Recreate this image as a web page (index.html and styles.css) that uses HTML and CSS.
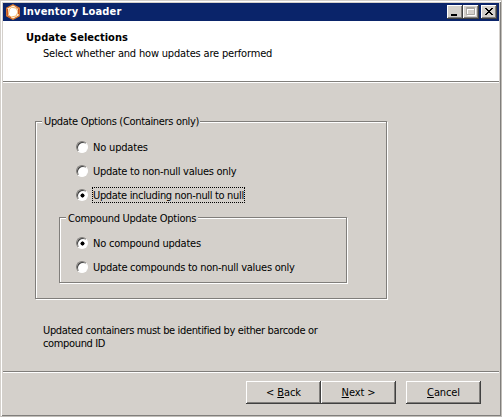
FILE: index.html
```html
<!DOCTYPE html>
<html lang="en">
<head>
<meta charset="utf-8">
<title>Inventory Loader</title>
<link rel="stylesheet" href="styles.css">
</head>
<body>
<main class="window">
  <header class="titlebar">
    <svg class="logo" width="16" height="16" viewBox="0 0 16 16"><path d="M8 .7 14.3 4.2V11.8L8 15.3 1.7 11.8V4.2Z" fill="#fff3df" stroke="#dc782b" stroke-width="1.3"/><path d="M6.5 3.2 11.3 4.2 13 8 11 12 6.2 13 3.3 10.8 4.3 5.5Z" fill="#fff" stroke="#efb36b"/><path d="M2.5 5V11.5L6 14M11.5 3 13.5 5V10" fill="none" stroke="#c85221"/></svg>
    <h1 class="title">Inventory Loader</h1>
    <div class="controls">
      <button class="control" aria-label="Minimize"><svg width="16" height="14"><path d="M4 9h6v2H4z"/></svg></button>
      <button class="control" aria-label="Maximize"><svg width="16" height="14"><path d="M4.5 3.5h8v7h-8zM4 4.5h9" fill="none" stroke="#fff"/><path d="M3.5 2.5h8v7h-8zM3 3.5h9" fill="none" stroke="#aaa7a2"/></svg></button>
      <button class="control close" aria-label="Close"><svg width="16" height="14"><path d="M4 3h2v1h1v1h2V4h1V3h2v1h-1v1h-1v1H9v1h1v1h1v1h1v1h-2V9H9V8H7v1H6v1H4V9h1V8h1V7h1V6H6V5H5V4H4z"/></svg></button>
    </div>
  </header>
  <section class="heading">
    <h2 class="step">Update Selections</h2>
    <p class="hint">Select whether and how updates are performed</p>
  </section>
  <section class="content">
    <div class="group outer">
      <span class="legend t-outer">Update Options (Containers only)</span>
      <label class="option"><i class="radio"></i><span class="label t-no">No updates</span></label>
      <label class="option"><i class="radio"></i><span class="label t-nonnull">Update to non-null values only</span></label>
      <label class="option"><i class="radio on"></i><span class="label focus t-null">Update including non-null to null</span></label>
      <div class="group inner">
        <span class="legend t-inner">Compound Update Options</span>
        <label class="option"><i class="radio on"></i><span class="label t-nocomp">No compound updates</span></label>
        <label class="option"><i class="radio"></i><span class="label t-comp">Update compounds to non-null values only</span></label>
      </div>
    </div>
    <p class="note">Updated containers must be identified by either barcode or<br>compound ID</p>
  </section>
  <footer class="actions">
    <button class="button">&lt; <u>B</u>ack</button>
    <button class="button"><u>N</u>ext &gt;</button>
    <button class="button cancel"><u>C</u>ancel</button>
  </footer>
</main>
</body>
</html>
```
FILE: styles.css
```css
* { box-sizing: border-box; }
body {
  margin: 0;
  overflow: hidden;
  background: #d4d0c8;
  color: #000;
  font: 11px/13px "DejaVu Sans Condensed", "DejaVu Sans", sans-serif;
  font-stretch: condensed;
}
h1, h2, p { margin: 0; }
button { font: inherit; color: inherit; padding: 0; }
.window {
  width: 502px;
  height: 417px;
  display: flex;
  flex-direction: column;
  background: #d4d0cb;
  padding: 2px 1px 1px 2px;
  border-left: 1px solid #d4d0cb;
  border-top: 1px solid #d4d0cb;
  border-right: 1px solid #c0bdb8;
  border-bottom: 1px solid #c0bdb8;
  box-shadow: inset 1px 1px #fff, inset -1px -1px #807e7b;
}
.titlebar {
  flex: none;
  height: 18px;
  display: flex;
  align-items: center;
  background: #0a246a;
  color: #fff;
  padding: 0 2px 0 2px;
  margin-right: 1px;
}
.logo { flex: none; }
.title {
  flex: 1;
  margin-left: 2px;
  font-size: 11px;
  line-height: 18px;
  letter-spacing: .17px;
  white-space: nowrap;
}
.controls { display: flex; }
.control {
  width: 16px;
  height: 14px;
  border: 0;
  background: #d4d0cb;
  box-shadow: inset -1px -1px #404040, inset 1px 1px #fff, inset -2px -2px #807e7b;
}
.control svg { display: block; }
.close { margin-left: 2px; }
.heading {
  flex: none;
  height: 61px;
  margin-right: 1px;
  background: #fff;
  border-bottom: 1px solid #807e7b;
  padding: 10px 0 0 23px;
}
.step { font-size: 11px; line-height: 13px; letter-spacing: .03px; }
.hint { margin: 3px 0 0 17px; letter-spacing: -.18px; }
.heading, .note, .label, .legend { white-space: nowrap; }
.content {
  height: 289px;
  flex: none;
  margin-right: 1px;
  border-top: 1px solid #fff;
  padding: 38px 0 0 32px;
}
.group {
  border: 1px solid #807e7b;
  box-shadow: inset 1px 1px #fff, 1px 1px #fff;
  display: flex;
  flex-direction: column;
}
.outer { width: 352px; height: 178px; padding-left: 40px; }
.inner { width: 288px; height: 66px; margin: 10px 0 0 -17px; padding-left: 16px; }
.legend {
  height: 13px;
  margin: -7px 0 7px -34px;
  padding: 0 1px 0 2px;
  background: #d4d0cb;
  align-self: flex-start;
}
.outer > .legend { width: 158px; }
.inner > .legend { margin: -6px 0 6px -10px; width: 132px; }
.t-outer { letter-spacing: -.33px; }
.t-no { letter-spacing: -.18px; }
.t-nonnull { letter-spacing: -.28px; }
.t-null { letter-spacing: -.33px; }
.t-inner { letter-spacing: -.26px; }
.t-nocomp { letter-spacing: -.22px; }
.t-comp { letter-spacing: -.27px; }
.option { display: flex; align-items: center; height: 24px; flex: none; }
.radio {
  width: 12px;
  height: 12px;
  border-radius: 50%;
  border: 1px solid;
  border-color: #807e7b #fff #fff #807e7b;
  background: #fff;
  box-shadow: inset 1px 1px #404040;
}
.on { background: radial-gradient(circle at 5.5px 5.5px, #000 0 1.8px, #fff 2.3px); }
.label { margin-left: 4px; padding-left: 1px; height: 16px; line-height: 17px; }
.focus { outline: 1px dotted #000; outline-offset: -1px; width: 153px; }
.note { margin: 25px 0 0 8px; letter-spacing: -.35px; }
.actions {
  flex: none;
  height: 43px;
  display: flex;
  margin-right: 1px;
  border-top: 1px solid #807e7b;
  box-shadow: inset 0 1px #fff;
  padding: 9px 0 0 243px;
}
.button {
  width: 75px;
  height: 23px;
  border: 0;
  background: #d4d0cb;
  box-shadow: inset -1px -1px #404040, inset 1px 1px #fff, inset -2px -2px #807e7b;
  line-height: 20px;
  letter-spacing: -.12px;
}
.cancel { margin-left: 10px; }
```
